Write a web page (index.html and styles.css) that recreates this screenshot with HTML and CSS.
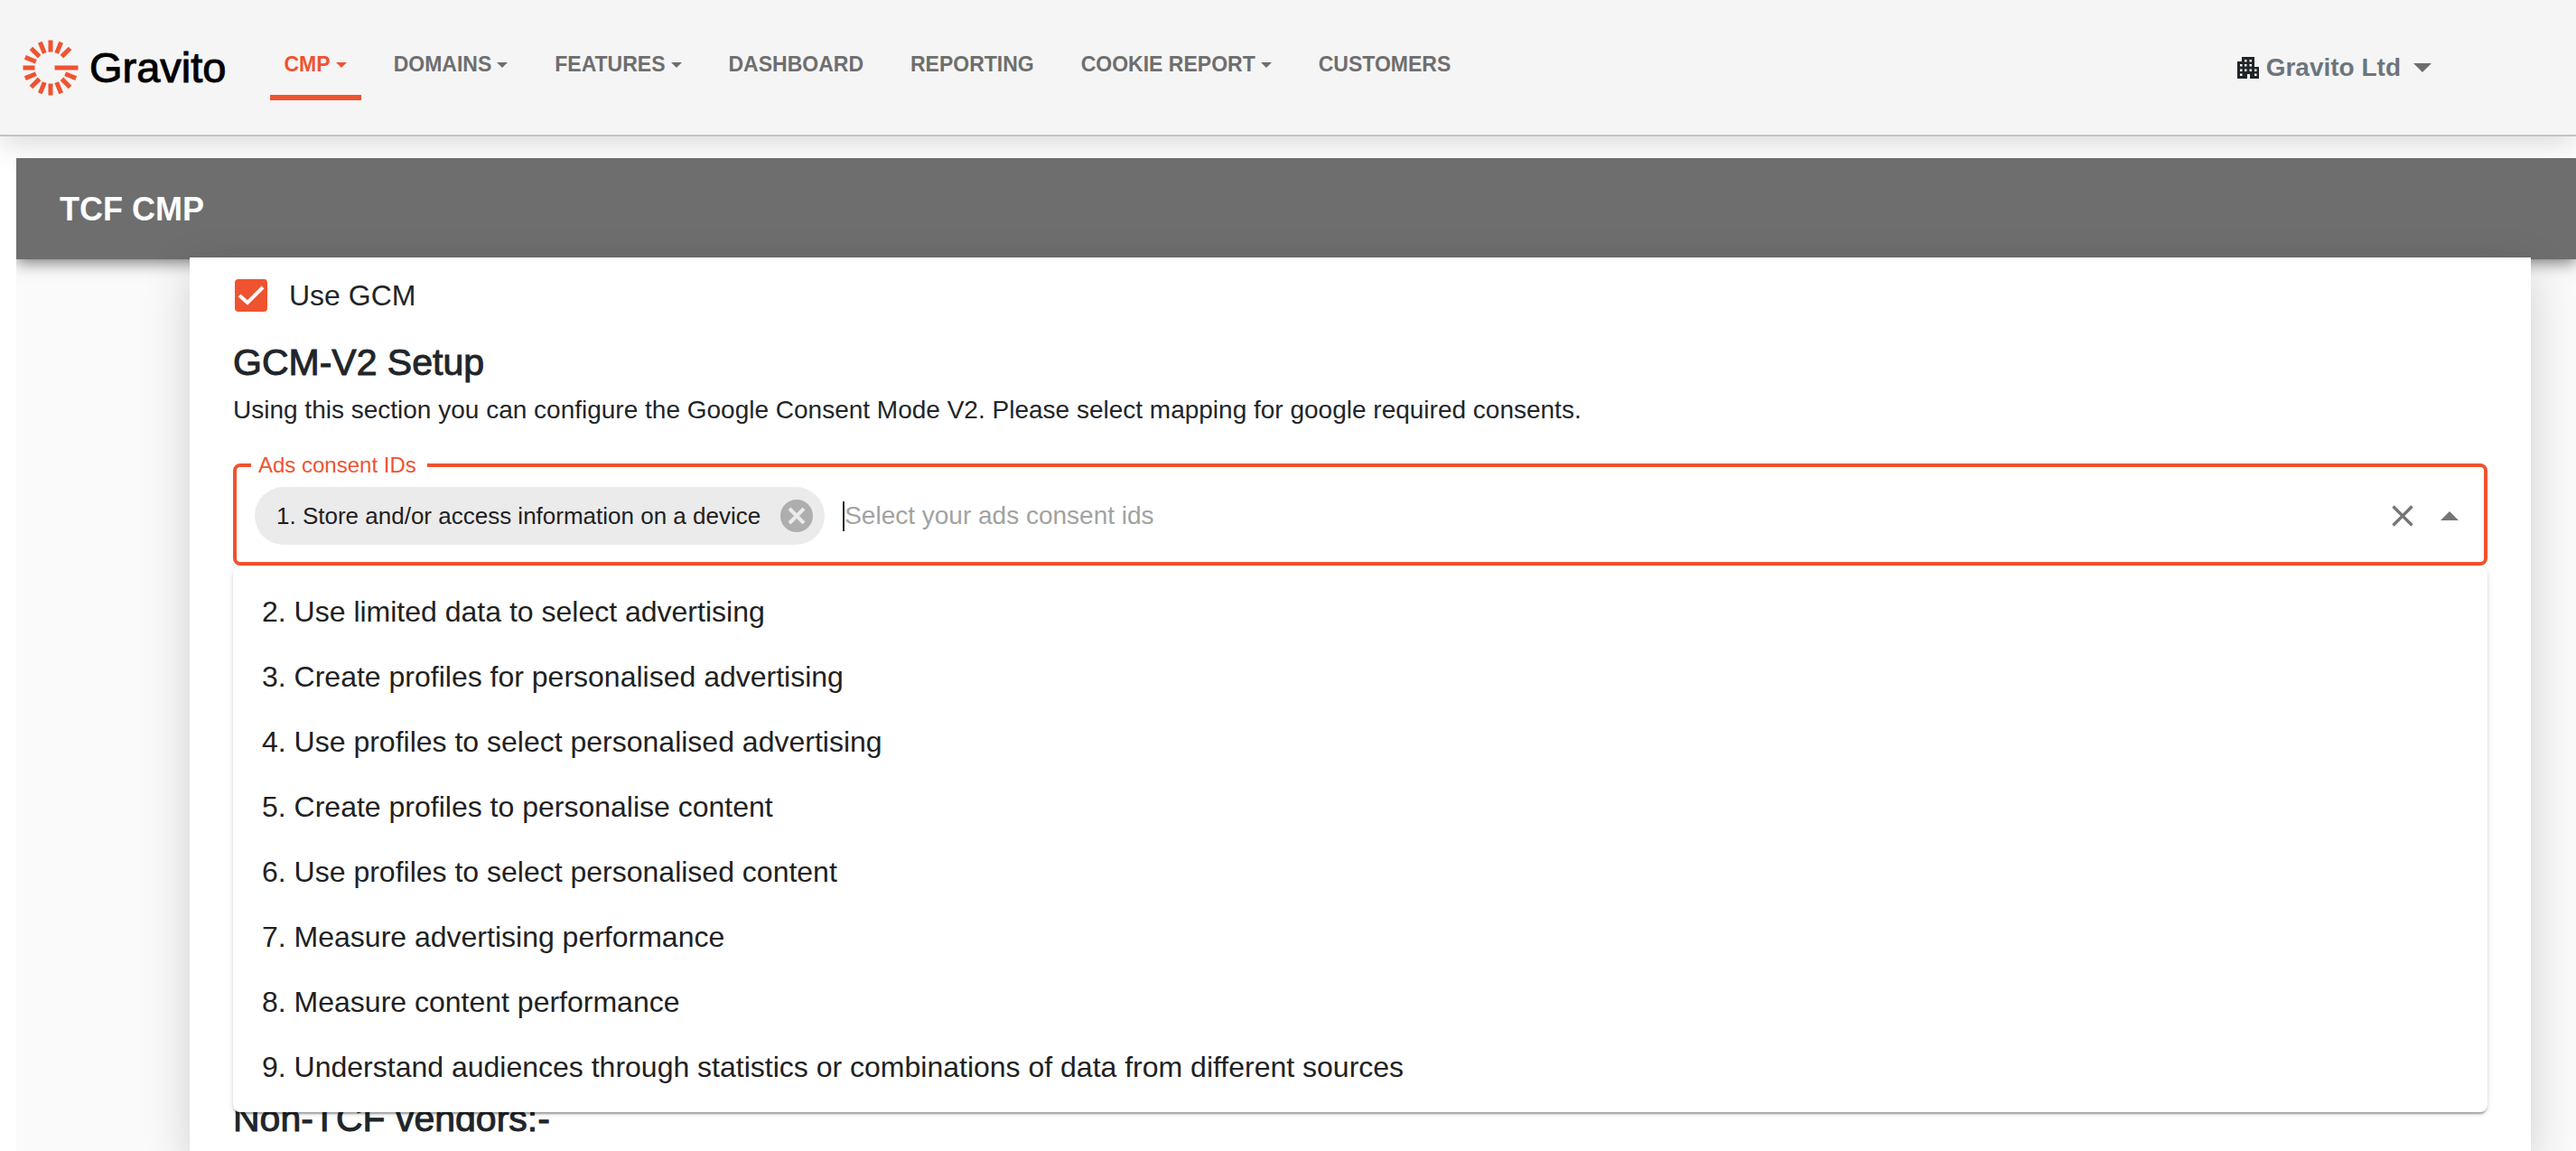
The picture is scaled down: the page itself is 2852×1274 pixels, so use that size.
FILE: index.html
```html
<!DOCTYPE html>
<html lang="en">
<head>
<meta charset="utf-8">
<title>Gravito – TCF CMP</title>
<link rel="stylesheet" href="styles.css">
</head>
<body>
<header class="topbar">
  <a class="brand" href="#">
    <svg class="brand-mark" viewBox="-31 -31 62 62" aria-hidden="true">
      <g stroke="currentColor" stroke-width="5">
        <path d="M0-17.500V-30.500M0 17.500V30.500M-17.500 0H-30.500M4.500 0H30.500"/>
        <path d="M0-17.500V-30.500M0 17.500V30.500" transform="rotate(22.500)"/>
        <path d="M0-17.500V-30.500M0 17.500V30.500" transform="rotate(45)"/>
        <path d="M0 17.500V30.500" transform="rotate(67.500)"/>
        <path d="M0-17.500V-30.500M0 17.500V30.500" transform="rotate(-22.500)"/>
        <path d="M0 17.500V30.500" transform="rotate(-45)"/>
        <path d="M0-17.500V-30.500M0 17.500V30.500" transform="rotate(-67.500)"/>
        <path d="M0-17.500V-30.500" transform="rotate(-45)"/>
      </g>
    </svg>
    <span class="brand-name">Gravito</span>
  </a>
  <nav class="nav">
    <a class="nav-link active" href="#">CMP<span class="caret"></span></a>
    <a class="nav-link" href="#">DOMAINS<span class="caret"></span></a>
    <a class="nav-link" href="#">FEATURES<span class="caret"></span></a>
    <a class="nav-link" href="#">DASHBOARD</a>
    <a class="nav-link" href="#">REPORTING</a>
    <a class="nav-link" href="#">COOKIE REPORT<span class="caret"></span></a>
    <a class="nav-link" href="#">CUSTOMERS</a>
  </nav>
  <button class="account" type="button">
    <svg class="account-icon" viewBox="0 0 24 24" aria-hidden="true"><path fill="currentColor" fill-rule="evenodd" d="M5 0H19V11H24V24H14V19H11V24H0V5H5ZM8 3V5.500H10.500V3ZM13.500 3V5.500H16V3ZM8 8V10.500H10.500V8ZM13.500 8V10.500H16V8ZM3 8V10.500H5.500V8ZM3 13.500V16H5.500V13.500ZM8 13.500V16H10.500V13.500ZM13.500 13.500V16H16V13.500ZM3 18.500V21H5.500V18.500ZM19 13.500V16H21.500V13.500ZM19 18.500V21H21.500V18.500Z"/></svg>
    <span>Gravito Ltd</span>
    <svg class="account-caret" viewBox="0 0 20 10" aria-hidden="true"><path fill="currentColor" d="M0 0H20L10 10Z"/></svg>
  </button>
</header>

<main class="page">
  <div class="titlebar"><h1>TCF CMP</h1></div>
  <section class="card">
    <label class="check"><input type="checkbox" checked><span>Use GCM</span></label>
    <h2>GCM-V2 Setup</h2>
    <p class="intro">Using this section you can configure the Google Consent Mode V2. Please select mapping for google required consents.</p>
    <div class="picker">
      <fieldset class="field">
        <legend><label for="ads">Ads consent IDs</label></legend>
        <div class="field-row">
          <span class="chip">1. Store and/or access information on a device
            <button class="chip-remove" type="button" aria-label="Remove">
              <svg viewBox="0 0 36 36" aria-hidden="true"><circle cx="18" cy="18" r="18" fill="#aeaeae"/><path d="M10 10L26 26M26 10L10 26" stroke="#ebebeb" stroke-width="4"/></svg>
            </button>
          </span>
          <input class="entry" id="ads" type="text" placeholder="Select your ads consent ids">
          <button class="tool" type="button" aria-label="Clear"><svg viewBox="0 0 24 24" aria-hidden="true"><path d="M1.500 1.500L22.500 22.500M22.500 1.500L1.500 22.500" stroke="currentColor" stroke-width="3.200"/></svg></button>
          <button class="tool" type="button" aria-label="Close"><svg viewBox="0 0 24 24" aria-hidden="true"><path fill="currentColor" d="M2 17H22L12 7Z"/></svg></button>
        </div>
      </fieldset>
      <ul class="options" role="listbox">
        <li role="option">2. Use limited data to select advertising</li>
        <li role="option">3. Create profiles for personalised advertising</li>
        <li role="option">4. Use profiles to select personalised advertising</li>
        <li role="option">5. Create profiles to personalise content</li>
        <li role="option">6. Use profiles to select personalised content</li>
        <li role="option">7. Measure advertising performance</li>
        <li role="option">8. Measure content performance</li>
        <li role="option">9. Understand audiences through statistics or combinations of data from different sources</li>
      </ul>
    </div>
    <h2 class="vendors">Non-TCF vendors:-</h2>
  </section>
</main>
</body>
</html>
```
FILE: styles.css
```css
:root {
  --accent: #ef5330;
  --grey: #6e6e6e;
  --ink: #212529;
}

* { box-sizing: border-box; }

body {
  margin: 0;
  min-height: 100vh;
  display: flex;
  flex-direction: column;
  background: #fff;
  color: var(--ink);
  font-family: "Liberation Sans", Arial, sans-serif;
  font-size: 28px;
}

button { border: 0; padding: 0; background: none; font: inherit; color: inherit; }
svg { display: block; }

.topbar {
  display: flex;
  align-items: center;
  height: 151px;
  padding: 0 160px 0 25px;
  background: #f5f5f5;
  border-bottom: 2px solid #c4c4c4;
  box-shadow: 0 8px 32px rgba(0, 0, 0, .15);
}

.brand {
  display: flex;
  align-items: center;
  gap: 12px;
  color: var(--accent);
  text-decoration: none;
}
.brand-mark { width: 62px; height: 62px; }
.brand-name {
  color: #000;
  font-size: 47px;
  line-height: 52px;
  -webkit-text-stroke: 1px #000;
}

.nav { display: flex; gap: 20px; margin-left: 48px; }
.nav-link {
  display: flex;
  align-items: center;
  gap: 6px;
  height: 72px;
  padding: 0 16px;
  border-bottom: 6px solid transparent;
  color: var(--grey);
  font-size: 23px;
  font-weight: 700;
  text-decoration: none;
}
.nav-link.active { color: var(--accent); border-color: var(--accent); }
.caret {
  border: 6px solid transparent;
  border-top-color: currentColor;
  border-bottom: 0;
}

.account {
  display: flex;
  align-items: center;
  gap: 8px;
  margin-left: auto;
  color: #6c757d;
  font-weight: 700;
}
.account-icon { width: 24px; height: 24px; color: var(--ink); }
.account-caret { width: 20px; height: 10px; margin-left: 6px; color: var(--grey); }

.page {
  flex: 1;
  display: flex;
  flex-direction: column;
  margin: 24px 0 0 18px;
  background: #fafafa;
  position: relative;
  overflow: hidden;
}

.titlebar {
  display: flex;
  align-items: center;
  height: 112px;
  padding: 2px 48px 0;
  background: var(--grey);
  box-shadow: 0 4px 16px rgba(0, 0, 0, .5);
  color: #fff;
}
h1 { margin: 0; font-size: 36px; line-height: 44px; }

.card {
  flex: 1;
  margin: -2px 50px 0 192px;
  padding: 20px 48px 0;
  background: #fff;
  box-shadow: 0 16px 48px rgba(0, 0, 0, .175);
}

.check { display: flex; align-items: center; gap: 24px; height: 44px; padding-left: 2px; font-size: 32px; }
.check input {
  appearance: none;
  width: 36px;
  height: 36px;
  margin: 0;
  border-radius: 4px;
  background: var(--accent) url("data:image/svg+xml,%3Csvg xmlns='http://www.w3.org/2000/svg' viewBox='0 0 36 36'%3E%3Cpath d='M5 18L14 26L31 9' fill='none' stroke='white' stroke-width='4'/%3E%3C/svg%3E");
}

h2 {
  margin: 28px 0 0;
  font-size: 41px;
  line-height: 48px;
  font-weight: 400;
  -webkit-text-stroke: 1px var(--ink);
}
.intro { margin: 9px 0 0; line-height: 40px; }

.picker { position: relative; margin-top: 27px; }
.field {
  margin: 0;
  padding: 0 20px;
  border: 4px solid var(--accent);
  border-radius: 8px;
  min-width: 0;
}
.field legend {
  margin-left: -4px;
  padding: 0 12px 0 8px;
  color: var(--accent);
  font-size: 24px;
  line-height: 28px;
}
.field-row { display: flex; align-items: center; height: 93px; padding-bottom: 9px; }

.chip {
  display: flex;
  align-items: center;
  gap: 22px;
  height: 64px;
  padding: 0 13px 0 24px;
  border-radius: 32px;
  background: #ebebeb;
  color: #212121;
  font-size: 26px;
}
.chip-remove { width: 36px; height: 36px; }

.entry {
  flex: 1;
  height: 33px;
  margin: 0 20px;
  padding: 0;
  border: 0;
  border-left: 2px solid #212121;
  outline: 0;
  background: none;
  color: #212121;
  font: inherit;
}
.entry::placeholder { color: #a2a2a2; }
.tool { width: 24px; height: 24px; margin-right: 28px; color: #757575; }
.tool:last-child { margin-right: 6px; }

.options {
  position: absolute;
  top: 100%;
  left: 0;
  right: 0;
  margin: 1px 0 0;
  padding: 14px 0;
  list-style: none;
  background: #fff;
  border-radius: 8px;
  box-shadow: 0 4px 2px -2px rgba(0, 0, 0, .2), 0 2px 2px rgba(0, 0, 0, .14), 0 2px 6px rgba(0, 0, 0, .12);
  color: #212121;
  font-size: 32px;
}
.options li { height: 72px; padding: 0 32px; line-height: 72px; }

.vendors { margin-top: 588px; }
```
